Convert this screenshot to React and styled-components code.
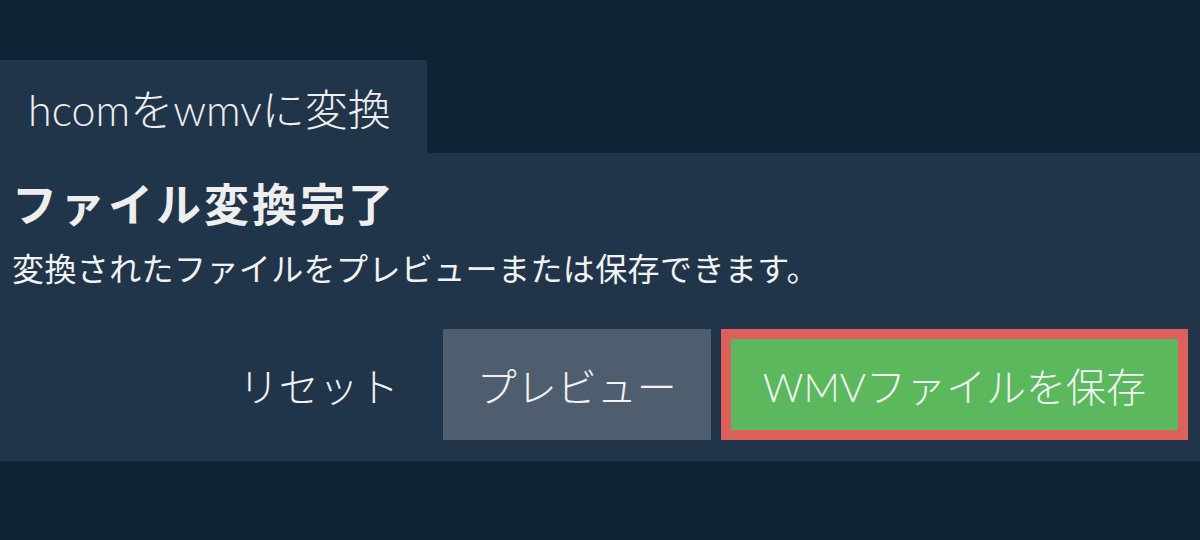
import React from 'react'
import styled, { createGlobalStyle } from 'styled-components'

const GlobalStyle = createGlobalStyle`
  body {
    margin: 0;
    background: #0f2337;
    font-family: "Lato", "Noto Sans CJK JP", sans-serif;
    color: #f0f0f0;
  }
`

const Page = styled.div`
  padding-top: 60px;
  height: 540px;
  box-sizing: border-box;
`

const Tab = styled.div`
  width: 427px;
  height: 93px;
  box-sizing: border-box;
  padding-left: 28px;
  display: flex;
  align-items: center;
  background: #203549;
  font-size: 43px;
  font-weight: 300;
  color: #eeeeee;
`

const Panel = styled.div`
  background: #203549;
  padding: 20px 12px 21px;
`

const Title = styled.h1`
  margin: 0;
  font-size: 45px;
  font-weight: 700;
  line-height: 64px;
  letter-spacing: 3px;
  color: #eeeeee;
`

const Message = styled.p`
  margin: 10px 0 0;
  font-size: 32px;
  line-height: 44px;
  letter-spacing: 0.4px;
  color: #f2f2f2;
`

const Actions = styled.div`
  display: flex;
  justify-content: flex-end;
  align-items: center;
  gap: 10px;
  margin-top: 38px;
`

const Button = styled.button`
  height: 111px;
  box-sizing: border-box;
  border: ${p => (p.$highlight ? '10px solid #dc605c' : 'none')};
  padding: 0 ${p => p.$pad}px;
  background: ${p => p.$bg || 'transparent'};
  color: #f2f2f2;
  font-family: inherit;
  font-size: 40px;
  font-weight: 300;
  cursor: pointer;
`

export default function App() {
  return (
    <>
      <GlobalStyle />
      <Page>
        <Tab>hcomをwmvに変換</Tab>
        <Panel>
          <Title>ファイル変換完了</Title>
          <Message>変換されたファイルをプレビューまたは保存できます。</Message>
          <Actions>
            <Button $pad={34}>リセット</Button>
            <Button $pad={34} $bg="#4e5e6e">プレビュー</Button>
            <Button $pad={32} $bg="#5cb85c" $highlight>WMVファイルを保存</Button>
          </Actions>
        </Panel>
      </Page>
    </>
  )
}
